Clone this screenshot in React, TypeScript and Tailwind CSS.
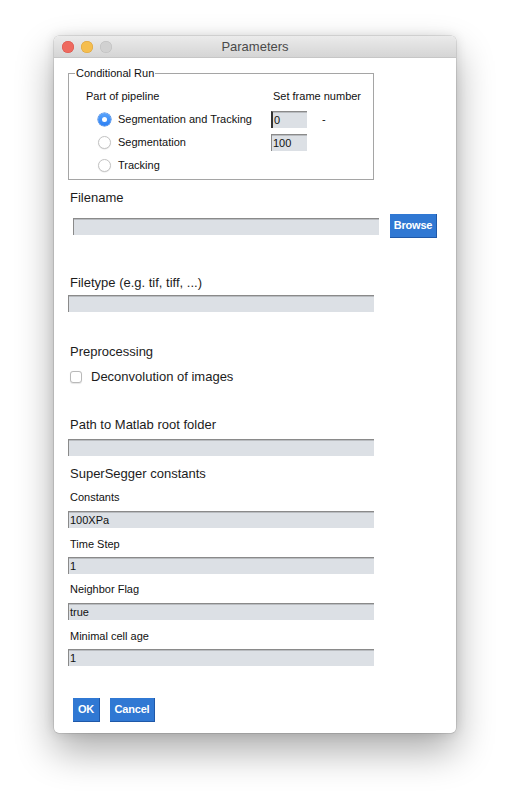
import React from "react";

const sf = { fontFamily: '"Liberation Sans", Arial, sans-serif' };

function Field({ value, className }: { value?: string; className?: string }) {
  return (
    <div
      className={
        "h-[17px] bg-[#dce0e5] border-t border-l border-t-[#8a8a8a] border-l-[#8a8a8a] shadow-[inset_0_1px_0_#b9bcc0] pl-[1px] text-[11px] leading-[16px] text-[#111] " +
        (className ?? "")
      }
    >
      {value}
    </div>
  );
}

function Radio({ checked }: { checked?: boolean }) {
  if (checked) {
    return (
      <span className="flex h-[13px] w-[13px] items-center justify-center rounded-full bg-gradient-to-b from-[#5aa4fb] to-[#2b7ff3] shadow-[0_0_0_0.5px_#2a72d8]">
        <span className="h-[5px] w-[5px] rounded-full bg-white" />
      </span>
    );
  }
  return (
    <span className="h-[13px] w-[13px] rounded-full border border-[#c4c4c4] bg-white shadow-[0_0.5px_1px_rgba(0,0,0,0.12)]" />
  );
}

function BlueButton({ label, w }: { label: string; w: string }) {
  return (
    <button
      className={
        "flex h-[24px] items-center justify-center bg-[#3078d3] border-r border-b border-[#1f58a8] text-[11px] font-bold tracking-[-0.2px] text-white " +
        w
      }
    >
      {label}
    </button>
  );
}

export default function App() {
  return (
    <div className="min-h-screen bg-white pl-[54px] pt-[36px]" style={sf}>
      <div className="w-[402px] rounded-[5px] bg-white shadow-[0_18px_38px_rgba(0,0,0,0.33),0_0_12px_rgba(0,0,0,0.12),0_0_0_0.5px_rgba(0,0,0,0.18)]">
        {/* title bar */}
        <div className="flex h-[22px] items-center rounded-t-[5px] border-b border-[#c6c6c6] bg-gradient-to-b from-[#ebebeb] to-[#d5d5d5]">
          <div className="flex w-[58px] items-center gap-[7px] pl-[8px]">
            <span className="h-[12px] w-[12px] rounded-full bg-[#ee6a5f] shadow-[inset_0_0_0_0.5px_#d9524a]" />
            <span className="h-[12px] w-[12px] rounded-full bg-[#f5be4f] shadow-[inset_0_0_0_0.5px_#d9a03c]" />
            <span className="h-[12px] w-[12px] rounded-full bg-[#d1d1d1] shadow-[inset_0_0_0_0.5px_#bcbcbc]" />
          </div>
          <div className="flex-1 text-center text-[13px] text-[#4a4a4a]">Parameters</div>
          <div className="w-[58px]" />
        </div>

        <div className="flex flex-col pb-[11px] text-[#1c1c1c]">
          {/* conditional run */}
          <fieldset className="ml-[14px] mt-[8px] w-[306px] border border-[#a5a5a5] pb-[2px]">
            <legend className="ml-[6px] px-[1px] text-[11px] leading-[14px] text-[#111]">Conditional Run</legend>
            <div className="mt-[5px] pl-[17px] text-[11px] text-[#111]">
              <div className="flex h-[23px] items-center">
                <span className="w-[187px]">Part of pipeline</span>
                <span>Set frame number</span>
              </div>
              <div className="flex h-[23px] items-center">
                <div className="flex w-[185px] items-center gap-[7px] pl-[12px]">
                  <Radio checked />
                  <span>Segmentation and Tracking</span>
                </div>
                <Field value="0" className="w-[36px] border-l-2 border-l-[#333]" />
                <span className="ml-[15px]">-</span>
              </div>
              <div className="flex h-[23px] items-center">
                <div className="flex w-[185px] items-center gap-[7px] pl-[12px]">
                  <Radio />
                  <span>Segmentation</span>
                </div>
                <Field value="100" className="w-[36px]" />
              </div>
              <div className="flex h-[23px] items-center">
                <div className="flex w-[185px] items-center gap-[7px] pl-[12px]">
                  <Radio />
                  <span>Tracking</span>
                </div>
              </div>
            </div>
          </fieldset>

          {/* filename */}
          <div className="ml-[16px] mt-[10px] text-[13px] leading-[16px]">Filename</div>
          <div className="ml-[19px] mt-[8px] flex h-[24px] items-center">
            <Field className="w-[306px]" />
            <div className="ml-[11px]">
              <BlueButton label="Browse" w="w-[47px]" />
            </div>
          </div>

          {/* filetype */}
          <div className="ml-[16px] mt-[37px] text-[13px] leading-[16px]">Filetype (e.g. tif, tiff, ...)</div>
          <Field className="ml-[14px] mt-[4px] w-[306px]" />

          {/* preprocessing */}
          <div className="ml-[16px] mt-[32px] text-[13px] leading-[16px]">Preprocessing</div>
          <div className="ml-[16px] mt-[9px] flex h-[16px] items-center gap-[9px] text-[13px]">
            <span className="h-[12px] w-[12px] rounded-[3px] border border-[#b9b9b9] bg-white shadow-[0_0.5px_1px_rgba(0,0,0,0.1)]" />
            <span>Deconvolution of images</span>
          </div>

          {/* matlab */}
          <div className="ml-[16px] mt-[32px] text-[13px] leading-[16px]">Path to Matlab root folder</div>
          <Field className="ml-[14px] mt-[6px] w-[306px]" />

          {/* supersegger */}
          <div className="ml-[16px] mt-[10px] text-[13px] leading-[16px]">SuperSegger constants</div>

          <div className="ml-[16px] mt-[8px] text-[11px] leading-[14px] text-[#111]">Constants</div>
          <Field value="100XPa" className="ml-[14px] mt-[7px] w-[306px]" />

          <div className="ml-[16px] mt-[9px] text-[11px] leading-[14px] text-[#111]">Time Step</div>
          <Field value="1" className="ml-[14px] mt-[6px] w-[306px]" />

          <div className="ml-[16px] mt-[8px] text-[11px] leading-[14px] text-[#111]">Neighbor Flag</div>
          <Field value="true" className="ml-[14px] mt-[7px] w-[306px]" />

          <div className="ml-[16px] mt-[9px] text-[11px] leading-[14px] text-[#111]">Minimal cell age</div>
          <Field value="1" className="ml-[14px] mt-[6px] w-[306px]" />

          {/* buttons */}
          <div className="ml-[19px] mt-[32px] flex gap-[10px]">
            <BlueButton label="OK" w="w-[27px]" />
            <BlueButton label="Cancel" w="w-[45px]" />
          </div>
        </div>
      </div>
    </div>
  );
}
